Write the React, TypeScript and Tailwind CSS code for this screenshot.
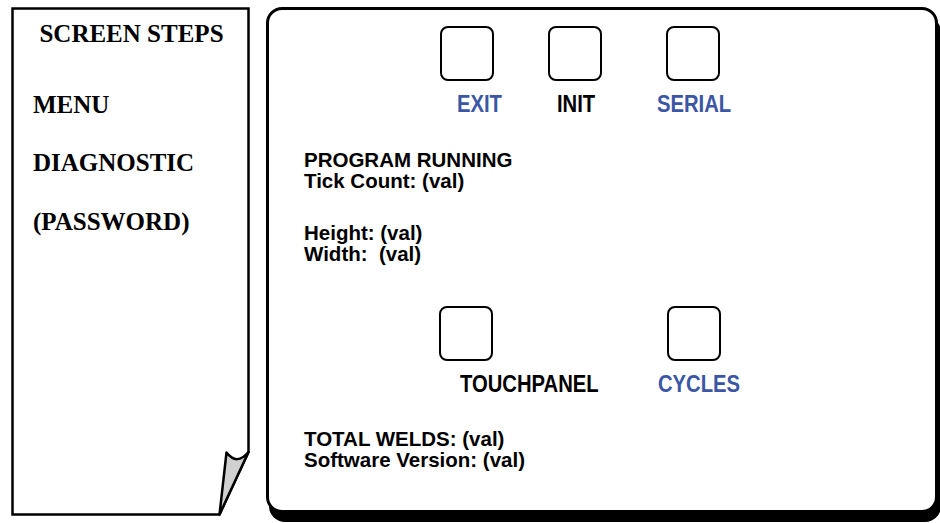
import React from "react";

const serif = { fontFamily: '"Liberation Serif", "Times New Roman", serif' };
const sans = { fontFamily: '"Liberation Sans", Arial, sans-serif' };

function Box() {
  return <div className="w-[54px] h-[55px] shrink-0 rounded-[8px] border-2 border-black bg-white" />;
}

function Label({ text, blue, w }: { text: string; blue?: boolean; w: string }) {
  return (
    <div className={`${w} shrink-0 h-[23px]`}>
      <span
        className={`inline-block origin-left scale-x-[0.88] text-[23px] leading-[23px] font-bold whitespace-nowrap ${
          blue ? "text-[#3b56a5]" : "text-black"
        }`}
      >
        {text}
      </span>
    </div>
  );
}

export default function App() {
  return (
    <div className="w-[940px] h-[523px] overflow-hidden bg-white flex items-start">
      {/* Left folded page */}
      <div className="relative ml-[11px] mt-[7px] w-[240px] h-[510px] shrink-0" style={serif}>
        <svg className="absolute inset-0" width="240" height="510" viewBox="11 7 240 510">
          <path
            d="M12.5 8.5 H248.5 V452 L219.5 514.5 H12.5 Z"
            fill="#fff"
            stroke="#000"
            strokeWidth="2.5"
            strokeLinejoin="miter"
          />
          <path
            d="M248.5 452 Q237 466 226.5 452.5 L219.5 514.5 Z"
            fill="#d0d0d0"
            stroke="#000"
            strokeWidth="2.5"
            strokeLinejoin="round"
          />
        </svg>
        <div className="relative flex flex-col pt-[14px] text-[25px] leading-[25px] font-bold text-black">
          <div className="text-center pl-[1px]">SCREEN STEPS</div>
          <div className="mt-[46px] pl-[22px]">MENU</div>
          <div className="mt-[33px] pl-[22px]">DIAGNOSTIC</div>
          <div className="mt-[34px] pl-[22px]">(PASSWORD)</div>
        </div>
      </div>

      {/* Right panel */}
      <div
        className="ml-[15px] mt-[7px] w-[672px] h-[506px] shrink-0 rounded-[16px] border-[3px] border-black bg-white shadow-[3px_9px_0_0_#000] flex flex-col text-black"
        style={sans}
      >
        <div className="flex mt-[16px] ml-[171px]">
          <Box />
          <div className="ml-[54px]"><Box /></div>
          <div className="ml-[64px]"><Box /></div>
        </div>
        <div className="flex mt-[11.5px] ml-[188px]">
          <Label text="EXIT" blue w="w-[100px]" />
          <Label text="INIT" w="w-[100px]" />
          <Label text="SERIAL" blue w="w-[100px]" />
        </div>

        <div className="mt-[33px] pl-[35px] text-[20.5px] leading-[21px] font-bold">
          <div>PROGRAM RUNNING</div>
          <div>Tick Count: (val)</div>
          <div className="mt-[31px] whitespace-pre">Height: (val)</div>
          <div className="whitespace-pre">Width:  (val)</div>
        </div>

        <div className="flex mt-[42.5px] ml-[170px]">
          <Box />
          <div className="ml-[174px]"><Box /></div>
        </div>
        <div className="flex mt-[11.5px] ml-[190.7px]">
          <Label text="TOUCHPANEL" w="w-[198.3px]" />
          <Label text="CYCLES" blue w="w-[100px]" />
        </div>

        <div className="mt-[32px] pl-[35px] text-[20.5px] leading-[21px] font-bold">
          <div>TOTAL WELDS: (val)</div>
          <div>Software Version: (val)</div>
        </div>
      </div>
    </div>
  );
}
